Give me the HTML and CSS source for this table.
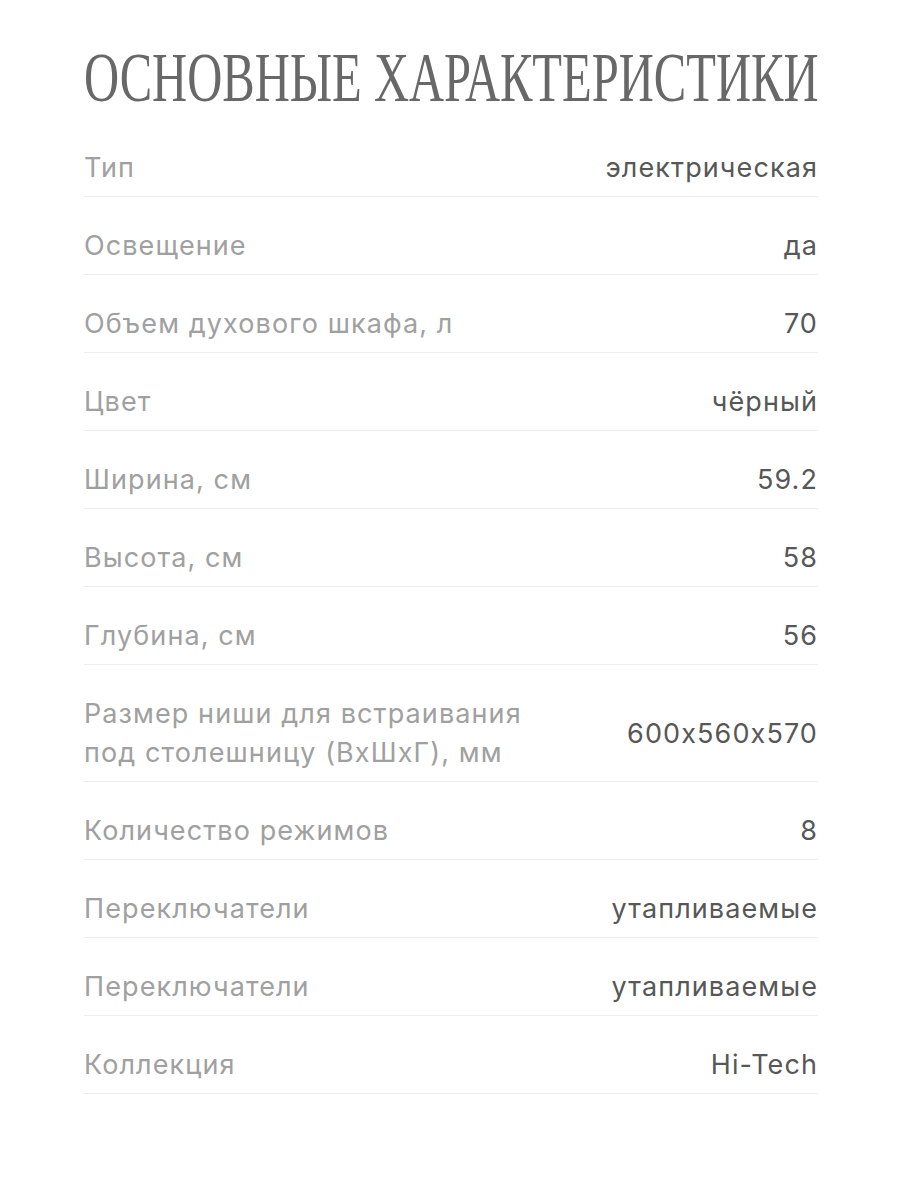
FILE: index.html
```html
<!DOCTYPE html>
<html lang="ru">
<head>
    <meta charset="UTF-8">
    <meta name="viewport" content="width=device-width, initial-scale=1.0">
    <title>Основные характеристики</title>
    <link rel="stylesheet" href="styles.css">
</head>
<body>
    <main class="specs">
        <h1 class="specs-title"><span>Основные характеристики</span></h1>

        <div class="spec-row">
            <div class="spec-label">Тип</div>
            <div class="spec-value">электрическая</div>
        </div>
        <div class="spec-row">
            <div class="spec-label">Освещение</div>
            <div class="spec-value">да</div>
        </div>
        <div class="spec-row">
            <div class="spec-label">Объем духового шкафа, л</div>
            <div class="spec-value">70</div>
        </div>
        <div class="spec-row">
            <div class="spec-label">Цвет</div>
            <div class="spec-value">чёрный</div>
        </div>
        <div class="spec-row">
            <div class="spec-label">Ширина, см</div>
            <div class="spec-value">59.2</div>
        </div>
        <div class="spec-row">
            <div class="spec-label">Высота, см</div>
            <div class="spec-value">58</div>
        </div>
        <div class="spec-row">
            <div class="spec-label">Глубина, см</div>
            <div class="spec-value">56</div>
        </div>
        <div class="spec-row">
            <div class="spec-label">Размер ниши для встраивания под столешницу (ВxШxГ), мм</div>
            <div class="spec-value">600x560x570</div>
        </div>
        <div class="spec-row">
            <div class="spec-label">Количество режимов</div>
            <div class="spec-value">8</div>
        </div>
        <div class="spec-row">
            <div class="spec-label">Переключатели</div>
            <div class="spec-value">утапливаемые</div>
        </div>
        <div class="spec-row">
            <div class="spec-label">Переключатели</div>
            <div class="spec-value">утапливаемые</div>
        </div>
        <div class="spec-row">
            <div class="spec-label">Коллекция</div>
            <div class="spec-value">Hi-Tech</div>
        </div>
    </main>
</body>
</html>
```

FILE: styles.css
```css
/* Page */
body {
    margin: 0;
    padding: 0;
    background-color: #fff;
    font-family: Inter, "Noto Sans", sans-serif;
    color: #555;
}

.specs {
    padding: 0 82px 0 84px;
}

/* Title */
.specs-title {
    margin: 0;
    height: 119px;
    overflow: hidden;
    font-family: "Liberation Serif", serif;
    font-weight: normal;
    font-size: 70px;
    line-height: 1;
    text-transform: uppercase;
    color: #686868;
    white-space: nowrap;
}

.specs-title span {
    display: inline-block;
    padding-top: 43px;
    transform: scaleX(0.694);
    transform-origin: left top;
}

/* Rows */
.spec-row {
    display: flex;
    justify-content: space-between;
    align-items: center;
    gap: 30px;
    padding: 29px 0 9px;
    border-bottom: 1px solid #eeeeee;
    font-size: 27px;
    line-height: 39px;
    letter-spacing: 1.1px;
}

.spec-label {
    max-width: 460px;
    color: #a0a0a0;
}

.spec-value {
    text-align: right;
    white-space: nowrap;
    color: #575757;
}
```
